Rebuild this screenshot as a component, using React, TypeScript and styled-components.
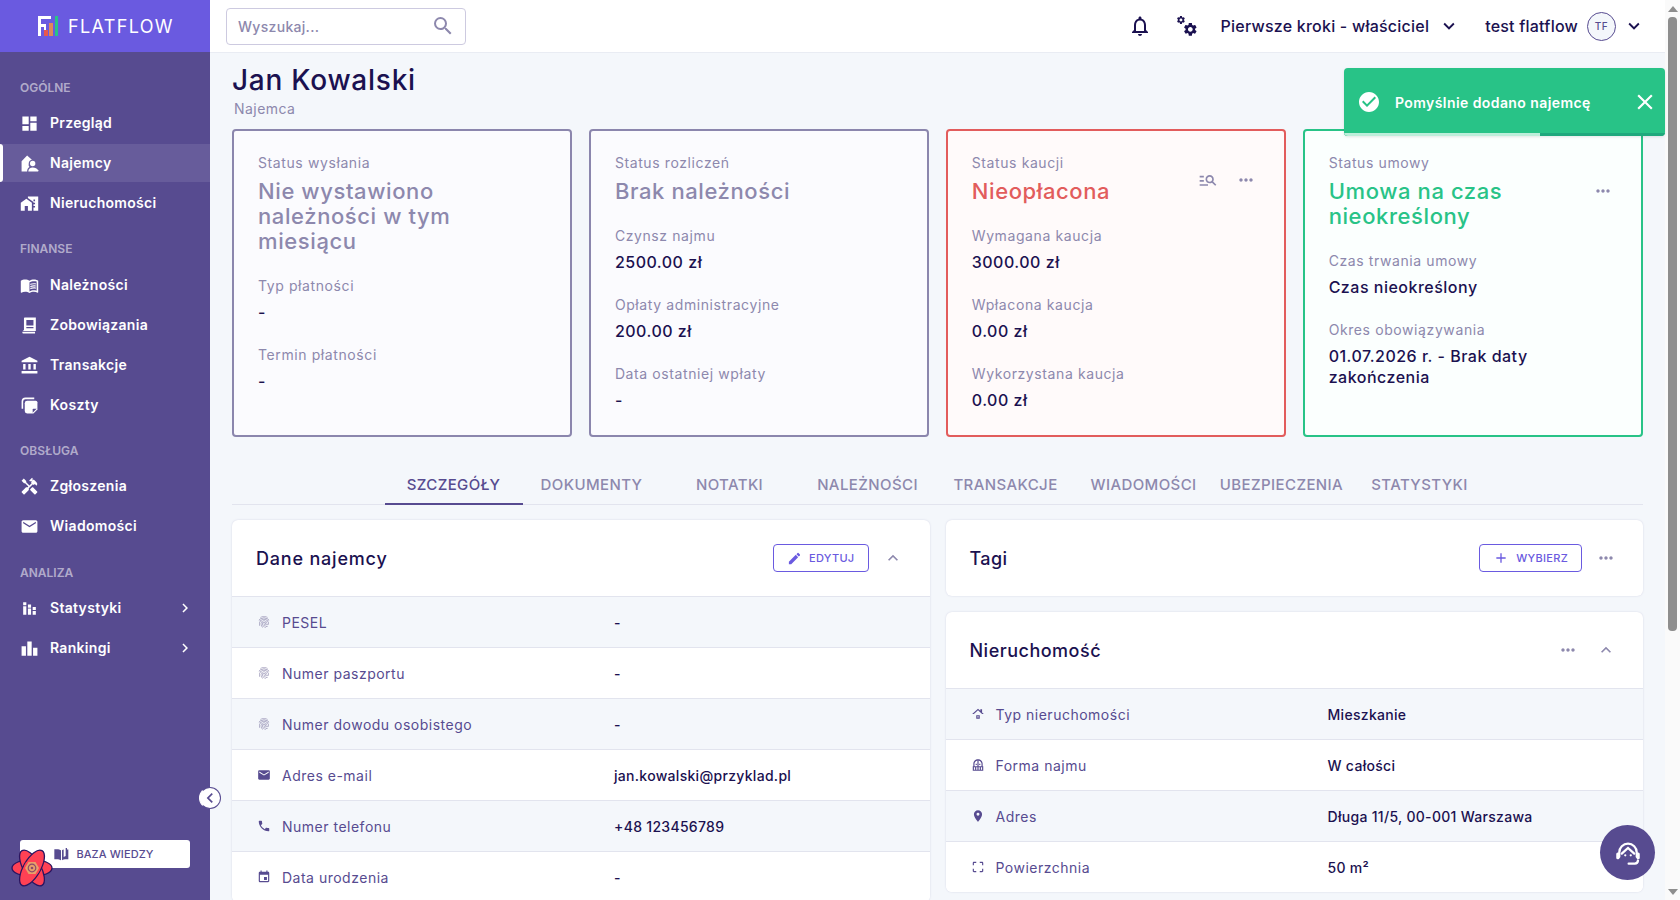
import React from "react";
import styled, { createGlobalStyle } from "styled-components";
import {
  MdDashboard, MdMapsHomeWork, MdMenuBook, MdAccountBalance, MdHandyman, MdEmail, MdLeaderboard,
  MdStackedBarChart, MdBalcony, MdRoofing, MdFingerprint, MdPhone, MdEvent, MdPlace, MdCropFree,
  MdEdit, MdAdd, MdSearch, MdMoreHoriz, MdExpandLess, MdExpandMore, MdChevronRight, MdChevronLeft,
  MdClose, MdCheckCircle, MdManageSearch, MdOutlineNotifications,
} from "react-icons/md";

const NAVY = "#1b1150";
const MUTED = "#8d88ad";
const PURPLE = "#574b90";
const ACCENT = "#6a5ae0";
const LINE = "#e2e4ee";
const PAGE = "#f4f7fb";
const GREEN = "#28c387";
const RED = "#e25c5c";

const Global = createGlobalStyle`
  html, body { margin: 0; height: 100%; overflow: hidden; background: ${PAGE}; }
  #root { height: 100%; }
  * { box-sizing: border-box; }
  body { font-family: "Inter", "Liberation Sans", sans-serif; letter-spacing: 0.45px; color: ${NAVY}; }
`;

const Shell = styled.div`display: flex; height: 900px; position: relative; overflow: hidden;`;

const Sidebar = styled.aside`
  width: 210px; flex: none; background: ${PURPLE}; display: flex; flex-direction: column;
  position: relative; color: #fff;
`;
const Brand = styled.div`
  height: 52px; flex: none; background: ${ACCENT}; display: flex; align-items: center;
  padding-left: 38px; gap: 10px;
`;
const BrandName = styled.span`font-size: 18px; letter-spacing: 1.35px; font-weight: 400; color: #fff;`;
const Nav = styled.nav`padding-top: 28px; display: flex; flex-direction: column; flex: 1;`;
const SectionLabel = styled.div<{ $top: number; $bottom: number }>`
  font-size: 12px; line-height: 16px; font-weight: 600; color: rgba(255,255,255,.55);
  padding-left: 20px; margin: ${(p) => p.$top}px 0 ${(p) => p.$bottom}px; letter-spacing: 0;
`;
const NavItem = styled.div<{ $active?: boolean }>`
  height: 38px; margin: 1px 0; display: flex; align-items: center; padding: 0 16px 0 20px; gap: 11px;
  position: relative; font-size: 14px; font-weight: 600; letter-spacing: 0.3px; color: #fff;
  background: ${(p) => (p.$active ? "#675c9b" : "transparent")};
  ${(p) => p.$active && `&::before { content: ""; position: absolute; left: 0; top: 0; bottom: 0; width: 3px; background: #fff; border-radius: 0 3px 3px 0; }`}
  & > svg:first-child { flex: none; width: 19px; height: 19px; }
`;
const NavText = styled.span`flex: 1; padding-bottom: 1px;`;
const KnowledgeButton = styled.div`
  margin: 0 20px 32px; height: 28px; background: #fff; border-radius: 3px; display: flex;
  align-items: center; justify-content: center; gap: 7px; color: ${PURPLE};
  font-size: 11px; font-weight: 500; letter-spacing: 0.1px; padding-right: 3px;
`;
const CollapseToggle = styled.div`
  position: absolute; right: -11px; bottom: 91px; width: 22px; height: 22px; border-radius: 50%;
  background: #fff; border: 1.5px solid ${PURPLE}; border-left-color: #fff; display: flex;
  align-items: center; justify-content: center; color: ${PURPLE}; z-index: 3;
`;
const DevtoolsBadge = styled.div`position: absolute; left: 11px; bottom: 12px; width: 42px; height: 40px; z-index: 4;`;

const Main = styled.main`flex: 1; min-width: 0; display: flex; flex-direction: column; overflow: hidden;`;
const TopBar = styled.header`
  height: 53px; flex: none; background: #fff; border-bottom: 1px solid #e9ecf3; display: flex;
  align-items: center; padding: 0 20px 0 16px; color: ${NAVY};
`;
const SearchBox = styled.div`
  width: 240px; height: 37px; border: 1px solid #cdcae0; border-radius: 4px; display: flex;
  align-items: center; justify-content: space-between; padding: 0 10px 0 11px; color: ${MUTED};
  font-size: 14px; font-weight: 500; letter-spacing: 0.3px;
`;
const TopActions = styled.div`margin-left: auto; display: flex; align-items: center;`;
const TopIcon = styled.div<{ $left?: number; $gap: number }>`
  display: flex; margin-left: ${(p) => p.$left ?? 0}px; margin-right: ${(p) => p.$gap}px; color: ${NAVY};
`;
const TopText = styled.span`font-size: 16px; font-weight: 500; letter-spacing: 0.22px;`;
const Avatar = styled.div`
  width: 29px; height: 29px; border-radius: 50%; border: 1px solid ${PURPLE}; background: ${PAGE};
  color: ${PURPLE}; font-size: 10px; font-weight: 500; display: flex; align-items: center;
  justify-content: center; margin: 0 7px 0 9px;
`;

const Content = styled.div`padding: 9px 22px 0 22px;`;
const Title = styled.h1`margin: 0; font-size: 28px; line-height: 36px; font-weight: 500; letter-spacing: 0.75px; color: ${NAVY};`;
const Subtitle = styled.div`margin: 1px 0 10px 2px; font-size: 14px; line-height: 20px; color: ${MUTED}; letter-spacing: 0.45px;`;

const CardGrid = styled.div`display: grid; grid-template-columns: repeat(4, 1fr); gap: 16.5px;`;
type Tone = "grey" | "red" | "green";
const toneBorder = { grey: "#8b86ad", red: RED, green: GREEN };
const toneBg = { grey: "#fbfbfe", red: "#fffafa", green: "#fbfffe" };
const Card = styled.section<{ $tone: Tone }>`
  height: 308px; border: 2px solid ${(p) => toneBorder[p.$tone]}; background: ${(p) => toneBg[p.$tone]};
  border-radius: 4px; padding: 22px 28px 0 24px;
`;
const CardHead = styled.div`display: flex; align-items: flex-start;`;
const CardHeadText = styled.div`flex: 1; min-width: 0;`;
const CardActions = styled.div<{ $top: number }>`
  display: flex; gap: 18px; padding-top: ${(p) => p.$top}px; color: ${MUTED}; flex: none;
`;
const FieldLabel = styled.div`font-size: 14px; line-height: 20px; color: ${MUTED}; letter-spacing: 0.6px;`;
const StatusText = styled.div<{ $tone: Tone }>`
  margin-top: 6px; font-size: 22px; line-height: 25px; font-weight: 500; letter-spacing: 0.6px;
  color: ${(p) => (p.$tone === "grey" ? MUTED : toneBorder[p.$tone])};
`;
const Field = styled.div`margin-top: 22px;`;
const FieldValue = styled.div`margin-top: 6px; font-size: 16px; line-height: 21px; font-weight: 500; letter-spacing: 0.5px; color: ${NAVY};`;

const TabBar = styled.div`margin-top: 28px; height: 40px; border-bottom: 1px solid ${LINE}; display: flex; justify-content: center; padding-right: 2px;`;
const Tab = styled.div<{ $active?: boolean }>`
  width: 138px; height: 40px; display: flex; align-items: center; justify-content: center;
  font-size: 15px; font-weight: 500; letter-spacing: 0.4px; white-space: nowrap;
  color: ${(p) => (p.$active ? PURPLE : MUTED)};
  border-bottom: 2px solid ${(p) => (p.$active ? PURPLE : "transparent")};
`;

const Columns = styled.div`margin-top: 15px; display: grid; grid-template-columns: 1fr 1fr; gap: 16px; align-items: start;`;
const Stack = styled.div`display: flex; flex-direction: column; gap: 16px;`;
const Panel = styled.section`background: #fff; border-radius: 6px; box-shadow: 0 0 2px rgba(60,50,120,.18); overflow: hidden;`;
const PanelHead = styled.div`height: 76px; display: flex; align-items: center; padding: 0 27px 0 24px;`;
const PanelTitle = styled.h2<{ $spacing: number }>`
  margin: 0 auto 0 0; font-size: 18px; font-weight: 500; letter-spacing: ${(p) => p.$spacing}px; color: ${NAVY};
`;
const OutlineButton = styled.div`
  height: 28px; border: 1px solid ${ACCENT}; border-radius: 4px; color: ${ACCENT}; display: flex;
  align-items: center; justify-content: center; gap: 7px; font-size: 11px; font-weight: 500;
  letter-spacing: 0.3px; padding: 0 13px;
`;
const HeadIcon = styled.div<{ $left: number }>`display: flex; margin-left: ${(p) => p.$left}px; color: ${MUTED};`;
const Row = styled.div<{ $even: boolean }>`
  height: 51px; border-top: 1px solid ${LINE}; display: grid; grid-template-columns: 357px 1fr;
  align-items: center; padding: 0 25px; background: ${(p) => (p.$even ? PAGE : "#fff")};
`;
const RowLabel = styled.div`
  display: flex; align-items: center; gap: 11px; font-size: 14px; color: ${PURPLE}; letter-spacing: 0.5px;
  & > svg { flex: none; width: 14px; height: 14px; }
`;
const RowLabelSoft = styled(RowLabel)`& > svg { color: ${MUTED}; }`;
const RowValue = styled.div`font-size: 14px; font-weight: 500; color: ${NAVY}; letter-spacing: 0.3px;`;

const Toast = styled.div`
  position: absolute; left: 1344px; top: 68px; width: 321px; height: 68px; background: ${GREEN};
  border-radius: 4px; color: #fff; display: flex; align-items: center; padding: 0 7px 0 13px; z-index: 5;
  overflow: hidden; box-shadow: 0 1px 3px rgba(0,0,0,.1);
`;
const ToastText = styled.span`margin-left: 14px; flex: 1; font-size: 14px; font-weight: 600; letter-spacing: 0.42px;`;
const ToastProgress = styled.div`
  position: absolute; left: 0; right: 0; bottom: 0; height: 3px; background: #1fa87c;
  &::before { content: ""; display: block; height: 100%; width: 196px; background: #bdeeda; }
`;
const HelpFab = styled.div`
  position: absolute; left: 1600px; top: 825px; width: 55px; height: 55px; border-radius: 50%;
  background: ${PURPLE}; display: flex; align-items: center; justify-content: center; z-index: 5;
`;

const Scrollbar = styled.div`width: 15px; flex: none; background: #fafafa; display: flex; flex-direction: column; align-items: center;`;
const ArrowUp = styled.div`width: 0; height: 0; margin: 6px 0 5px; border: 5px solid transparent; border-top: 0; border-bottom: 6px solid #8e8e8e;`;
const ArrowDown = styled.div`width: 0; height: 0; margin: auto 0 5px; border: 5px solid transparent; border-bottom: 0; border-top: 6px solid #8e8e8e;`;
const Thumb = styled.div`width: 9px; height: 614px; border-radius: 4px; background: #8e8e8e;`;

const Logo = () => (
  <svg width="20" height="20" viewBox="0 0 20 20">
    <path d="M0 0h13v3H3v5h5v3H3v9H0z" fill="#fff" />
    <path d="M6 11h2v9H6z" fill="#fff" />
    <rect x="6" y="14" width="4" height="6" fill="#e8574d" />
    <rect x="11" y="7" width="4" height="13" fill="#e0875a" />
    <rect x="17" y="0" width="3" height="20" fill="#28c387" />
  </svg>
);
const TenantIcon = () => (
  <svg viewBox="0 0 24 24" fill="currentColor">
    <path d="M9 2 2 9v13h7c0-2.500 1-4.300 3-5.500A5 5 0 0 1 11 12a5 5 0 0 1 4-4.800z" />
    <circle cx="16" cy="12" r="3.400" />
    <path d="M10.500 22c0-3 2.500-5 5.500-5s6 1.600 7 3.600V22z" />
  </svg>
);
const LedgerIcon = () => (
  <svg viewBox="0 0 24 24" fill="currentColor">
    <path fillRule="evenodd" d="M6 2h14v17H4v-1h1V3a1 1 0 0 1 1-1zm2 3v7h9V5zm0 9v1.5h9V14zM3 20h16v2H4a1 1 0 0 1-1-1z" />
  </svg>
);
const NotesIcon = () => (
  <svg viewBox="0 0 24 24" fill="currentColor">
    <path d="M7 2h11v2H7A3 3 0 0 0 4 7v9H2V7a5 5 0 0 1 5-5z" />
    <path d="M9 6h11a2 2 0 0 1 2 2v9l-5 5H9a3 3 0 0 1-3-3V9a3 3 0 0 1 3-3z" />
    <path d="M16 21v-4a1 1 0 0 1 1-1h4z" fill="#574b90" />
  </svg>
);
const Cogs = () => (
  <svg width="22" height="22" viewBox="0 0 24 24" fill="currentColor">
    <defs>
      <path id="cog" d="M19.14 12.94c.04-.3.06-.61.06-.94 0-.32-.02-.64-.07-.94l2.03-1.58c.18-.14.23-.41.12-.61l-1.92-3.32c-.12-.22-.37-.29-.59-.22l-2.39.96c-.5-.38-1.03-.7-1.62-.94l-.36-2.54c-.04-.24-.24-.41-.48-.41h-3.84c-.24 0-.43.17-.47.41l-.36 2.54c-.59.24-1.13.57-1.62.94l-2.39-.96c-.22-.08-.47 0-.59.22L2.74 8.87c-.12.21-.08.47.12.61l2.03 1.58c-.05.3-.09.63-.09.94s.02.64.07.94l-2.03 1.58c-.18.14-.23.41-.12.61l1.92 3.32c.12.22.37.29.59.22l2.39-.96c.5.38 1.03.7 1.62.94l.36 2.54c.05.24.24.41.48.41h3.84c.24 0 .44-.17.47-.41l.36-2.54c.59-.24 1.13-.56 1.62-.94l2.39.96c.22.08.47 0 .59-.22l1.92-3.32c.12-.22.07-.47-.12-.61l-2.01-1.58zM12 15.6c-1.98 0-3.6-1.62-3.6-3.6s1.62-3.6 3.6-3.6 3.6 1.62 3.6 3.6-1.62 3.6-3.6 3.6z" />
    </defs>
    <use href="#cog" transform="translate(7 7) scale(.72)" />
    <use href="#cog" transform="translate(0 0) scale(.45)" />
  </svg>
);
const BookIcon = () => (
  <svg width="16" height="16" viewBox="0 0 24 24" fill="currentColor">
    <path d="M12 6.5C10.2 5 7 4.500 2 5v15c5-.5 8.200.1 10 1.500z" />
    <path d="M13.500 6.500c.7-.5 1.500-.9 2.500-1.200v11.200l3-1.500V3h2v2.100l2 .1V20c-4.500-.5-7.500 0-9.500 1.200z" />
  </svg>
);
const Flower = () => (
  <svg width="42" height="40" viewBox="-21 -20 42 40">
    <g fill="#ff4154" stroke="#2a1560" strokeWidth="1.3">
      <ellipse rx="20" ry="8.500" />
      <ellipse rx="20" ry="8.500" transform="rotate(60)" />
      <ellipse rx="20" ry="8.500" transform="rotate(120)" />
    </g>
    <ellipse rx="8" ry="8" fill="#ff4154" />
    <polygon points="-7,0 -3.500,-6 3.500,-6 7,0 3.500,6 -3.500,6" fill="#e8a06a" />
    <circle r="3.800" fill="none" stroke="#8a4a6a" strokeWidth="1.200" />
    <circle r="1.300" fill="#8a4a6a" />
  </svg>
);
const HeadsetFace = () => (
  <svg width="30" height="30" viewBox="0 0 24 24" fill="none" stroke="#fff" strokeWidth="1.800" strokeLinecap="round">
    <path d="M5 15v-3.500a7 7 0 0 1 14 0V15" />
    <rect x="2.600" y="11.500" width="2.600" height="5.500" rx="1.200" fill="#fff" stroke="none" />
    <rect x="18.800" y="11.500" width="2.600" height="5.500" rx="1.200" fill="#fff" stroke="none" />
    <path d="M7 12.500 12 8l5 4.500" />
    <circle cx="9.800" cy="13.800" r=".9" fill="#fff" stroke="none" />
    <circle cx="14.200" cy="13.800" r=".9" fill="#fff" stroke="none" />
    <path d="M12.500 20.500h5c1.300 0 2.300-.8 2.500-2.500" />
  </svg>
);

const nav: { title: string; top: number; bottom: number; items: { icon: React.ReactNode; label: string; active?: boolean; more?: boolean }[] }[] = [
  { title: "OGÓLNE", top: 0, bottom: 7, items: [
    { icon: <MdDashboard />, label: "Przegląd" },
    { icon: <TenantIcon />, label: "Najemcy", active: true },
    { icon: <MdMapsHomeWork />, label: "Nieruchomości" },
  ] },
  { title: "FINANSE", top: 18, bottom: 8, items: [
    { icon: <MdMenuBook />, label: "Należności" },
    { icon: <LedgerIcon />, label: "Zobowiązania" },
    { icon: <MdAccountBalance />, label: "Transakcje" },
    { icon: <NotesIcon />, label: "Koszty" },
  ] },
  { title: "OBSŁUGA", top: 18, bottom: 7, items: [
    { icon: <MdHandyman />, label: "Zgłoszenia" },
    { icon: <MdEmail />, label: "Wiadomości" },
  ] },
  { title: "ANALIZA", top: 19, bottom: 7, items: [
    { icon: <MdStackedBarChart />, label: "Statystyki", more: true },
    { icon: <MdLeaderboard />, label: "Rankingi", more: true },
  ] },
];

const tabs = ["SZCZEGÓŁY", "DOKUMENTY", "NOTATKI", "NALEŻNOŚCI", "TRANSAKCJE", "WIADOMOŚCI", "UBEZPIECZENIA", "STATYSTYKI"];

const tenantRows: { icon: React.ReactNode; label: string; value: string; soft?: boolean }[] = [
  { icon: <MdFingerprint />, label: "PESEL", value: "-", soft: true },
  { icon: <MdFingerprint />, label: "Numer paszportu", value: "-", soft: true },
  { icon: <MdFingerprint />, label: "Numer dowodu osobistego", value: "-", soft: true },
  { icon: <MdEmail />, label: "Adres e-mail", value: "jan.kowalski@przyklad.pl" },
  { icon: <MdPhone />, label: "Numer telefonu", value: "+48 123456789" },
  { icon: <MdEvent />, label: "Data urodzenia", value: "-" },
];
const propertyRows: { icon: React.ReactNode; label: string; value: string; soft?: boolean }[] = [
  { icon: <MdRoofing />, label: "Typ nieruchomości", value: "Mieszkanie" },
  { icon: <MdBalcony />, label: "Forma najmu", value: "W całości" },
  { icon: <MdPlace />, label: "Adres", value: "Długa 11/5, 00-001 Warszawa" },
  { icon: <MdCropFree />, label: "Powierzchnia", value: "50 m²" },
];

const Rows = ({ rows }: { rows: typeof tenantRows }) => (
  <>
    {rows.map((r, i) => {
      const L = r.soft ? RowLabelSoft : RowLabel;
      return (
        <Row key={r.label} $even={i % 2 === 0}>
          <L>{r.icon}{r.label}</L>
          <RowValue>{r.value}</RowValue>
        </Row>
      );
    })}
  </>
);

const StatusField = ({ label, value }: { label: string; value: string }) => (
  <Field>
    <FieldLabel>{label}</FieldLabel>
    <FieldValue>{value}</FieldValue>
  </Field>
);

export default function App() {
  return (
    <>
      <Global />
      <Shell>
        <Sidebar>
          <Brand><Logo /><BrandName>FLATFLOW</BrandName></Brand>
          <Nav>
            {nav.map((s) => (
              <React.Fragment key={s.title}>
                <SectionLabel $top={s.top} $bottom={s.bottom}>{s.title}</SectionLabel>
                {s.items.map((it) => (
                  <NavItem key={it.label} $active={it.active}>
                    {it.icon}
                    <NavText>{it.label}</NavText>
                    {it.more && <MdChevronRight size={18} />}
                  </NavItem>
                ))}
              </React.Fragment>
            ))}
          </Nav>
          <KnowledgeButton><BookIcon />BAZA WIEDZY</KnowledgeButton>
          <CollapseToggle><MdChevronLeft size={20} /></CollapseToggle>
          <DevtoolsBadge><Flower /></DevtoolsBadge>
        </Sidebar>

        <Main>
          <TopBar>
            <SearchBox>Wyszukaj...<MdSearch size={24} color="#8d88ad" /></SearchBox>
            <TopActions>
              <TopIcon $gap={24}><MdOutlineNotifications size={24} /></TopIcon>
              <TopIcon $gap={23}><Cogs /></TopIcon>
              <TopText>Pierwsze kroki - właściciel</TopText>
              <TopIcon $left={9} $gap={25}><MdExpandMore size={22} /></TopIcon>
              <TopText>test flatflow</TopText>
              <Avatar>TF</Avatar>
              <TopIcon $gap={0}><MdExpandMore size={22} /></TopIcon>
            </TopActions>
          </TopBar>
          <Content>
            <Title>Jan Kowalski</Title>
            <Subtitle>Najemca</Subtitle>
            <CardGrid>
              <Card $tone="grey">
                <FieldLabel>Status wysłania</FieldLabel>
                <StatusText $tone="grey">Nie wystawiono należności w tym miesiącu</StatusText>
                <StatusField label="Typ płatności" value="-" />
                <StatusField label="Termin płatności" value="-" />
              </Card>
              <Card $tone="grey">
                <FieldLabel>Status rozliczeń</FieldLabel>
                <StatusText $tone="grey">Brak należności</StatusText>
                <StatusField label="Czynsz najmu" value="2500.00 zł" />
                <StatusField label="Opłaty administracyjne" value="200.00 zł" />
                <StatusField label="Data ostatniej wpłaty" value="-" />
              </Card>
              <Card $tone="red">
                <CardHead>
                  <CardHeadText>
                    <FieldLabel>Status kaucji</FieldLabel>
                    <StatusText $tone="red">Nieopłacona</StatusText>
                  </CardHeadText>
                  <CardActions $top={17}>
                    <MdManageSearch size={20} />
                    <MdMoreHoriz size={20} />
                  </CardActions>
                </CardHead>
                <StatusField label="Wymagana kaucja" value="3000.00 zł" />
                <StatusField label="Wpłacona kaucja" value="0.00 zł" />
                <StatusField label="Wykorzystana kaucja" value="0.00 zł" />
              </Card>
              <Card $tone="green">
                <CardHead>
                  <CardHeadText>
                    <FieldLabel>Status umowy</FieldLabel>
                    <StatusText $tone="green">Umowa na czas nieokreślony</StatusText>
                  </CardHeadText>
                  <CardActions $top={28}>
                    <MdMoreHoriz size={20} />
                  </CardActions>
                </CardHead>
                <StatusField label="Czas trwania umowy" value="Czas nieokreślony" />
                <StatusField label="Okres obowiązywania" value="01.07.2026 r. - Brak daty zakończenia" />
              </Card>
            </CardGrid>

            <TabBar>
              {tabs.map((t, i) => <Tab key={t} $active={i === 0}>{t}</Tab>)}
            </TabBar>

            <Columns>
              <Panel>
                <PanelHead>
                  <PanelTitle $spacing={0.8}>Dane najemcy</PanelTitle>
                  <OutlineButton><MdEdit size={15} />EDYTUJ</OutlineButton>
                  <HeadIcon $left={14}><MdExpandLess size={20} /></HeadIcon>
                </PanelHead>
                <Rows rows={tenantRows} />
              </Panel>
              <Stack>
                <Panel>
                  <PanelHead>
                    <PanelTitle $spacing={0.4}>Tagi</PanelTitle>
                    <OutlineButton><MdAdd size={16} />WYBIERZ</OutlineButton>
                    <HeadIcon $left={14}><MdMoreHoriz size={20} /></HeadIcon>
                  </PanelHead>
                </Panel>
                <Panel>
                  <PanelHead>
                    <PanelTitle $spacing={0.5}>Nieruchomość</PanelTitle>
                    <HeadIcon $left={0}><MdMoreHoriz size={20} /></HeadIcon>
                    <HeadIcon $left={18}><MdExpandLess size={20} /></HeadIcon>
                  </PanelHead>
                  <Rows rows={propertyRows} />
                </Panel>
              </Stack>
            </Columns>
          </Content>
        </Main>

        <Scrollbar><ArrowUp /><Thumb /><ArrowDown /></Scrollbar>

        <Toast>
          <MdCheckCircle size={24} />
          <ToastText>Pomyślnie dodano najemcę</ToastText>
          <MdClose size={26} />
          <ToastProgress />
        </Toast>
        <HelpFab><HeadsetFace /></HelpFab>
      </Shell>
    </>
  );
}
